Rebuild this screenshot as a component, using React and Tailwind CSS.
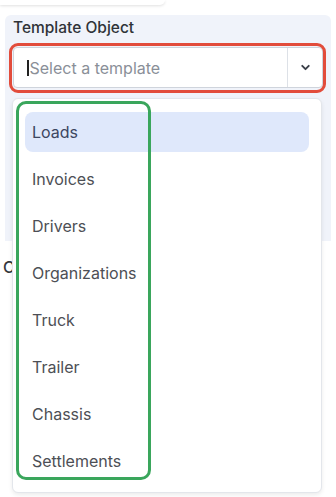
import React from "react";

const items = ["Loads", "Invoices", "Drivers", "Organizations", "Truck", "Trailer", "Chassis", "Settlements"];

export default function App() {
  return (
    <div
      className="relative w-[336px] h-[497px] overflow-hidden bg-white"
      style={{ fontFamily: "Inter, 'Noto Sans', sans-serif" }}
    >
      <div className="h-[5px] w-[165px] rounded-br-md bg-white shadow-[0_1px_3px_rgba(0,0,0,0.12)]" />
      <div className="mx-[5px] mt-[10px] h-[226px] rounded-t-md bg-[#f0f3fa] px-[8px] pt-[3px]">
        <div className="text-[15.5px] font-medium leading-[20px] text-[#2f3338]">Template Object</div>
        <div className="mt-[9px] flex h-[41px] items-stretch rounded-[4px] border border-[#cfd4dc] bg-white">
          <div className="flex flex-1 items-center pl-[13px]">
            <span className="mr-[1px] h-[16px] w-[1.5px] bg-[#222]" />
            <span className="text-[16px] text-[#8a8f98]">Select a template</span>
          </div>
          <div className="flex w-[35px] items-center justify-center border-l border-[#dde1e7]">
            <svg width="13" height="13" viewBox="0 0 24 24" fill="none" stroke="#3a3f48" strokeWidth="3.5" strokeLinecap="round" strokeLinejoin="round">
              <path d="M6 9l6 6 6-6" />
            </svg>
          </div>
        </div>
      </div>
      <div className="mt-[16px] pl-[3px] text-[16px] font-medium leading-[20px] text-[#35383d]">Columns</div>

      {/* red highlight */}
      <div className="absolute left-[9px] top-[43px] h-[50px] w-[317px] rounded-[9px] border-[3px] border-[#e24c3b]" />

      {/* dropdown menu */}
      <div className="absolute left-[12px] top-[98px] h-[395px] w-[310px] rounded-md border border-[#e3e6eb] bg-white px-[12px] pt-[13px] shadow-[0_2px_4px_rgba(0,0,0,0.08)]">
        <div className="flex flex-col gap-[7px]">
          {items.map((it, i) => (
            <div
              key={it}
              className={
                "flex h-[40px] items-center rounded-lg pl-[7px] text-[16px] " +
                (i === 0 ? "bg-[#dfe8fb] text-[#3c4660]" : "text-[#4d4f55]")
              }
            >
              {it}
            </div>
          ))}
        </div>
      </div>

      {/* green highlight */}
      <div className="absolute left-[16px] top-[101px] h-[379px] w-[135px] rounded-[10px] border-[3px] border-[#3aa65c]" />
    </div>
  );
}
